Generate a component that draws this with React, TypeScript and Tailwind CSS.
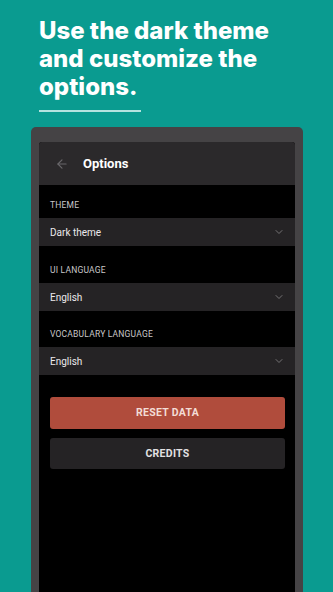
import { ArrowLeft, ChevronDown } from 'lucide-react';

const ui = { fontFamily: 'Roboto, "Liberation Sans", sans-serif' };

function Label({ text, top }: { text: string; top: string }) {
  return (
    <div className={`${top} pb-[8px] pl-[11px] text-[8.5px] leading-[10px] tracking-[0.2px] text-[#c9c7c9]`}>
      {text}
    </div>
  );
}

function Select({ value }: { value: string }) {
  return (
    <div className="flex h-[28px] items-center justify-between bg-[#252325] pl-[11px] pr-[10px]">
      <span className="text-[10px] text-[#ebe9eb]">{value}</span>
      <ChevronDown size={12} strokeWidth={2} className="text-[#747274]" />
    </div>
  );
}

export default function App() {
  return (
    <div className="flex h-[592px] w-[333px] flex-col overflow-hidden bg-[#0a9b90]">
      {/* Headline */}
      <div className="pl-[39px] pt-[17px]">
        <h1
          className="text-[24px] font-extrabold leading-[28px] text-white"
          style={{ fontFamily: 'Inter, "Noto Sans", sans-serif' }}
        >
          Use the dark theme
          <br />
          and customize the
          <br />
          options.
        </h1>
        <div className="mt-[9px] h-[2px] w-[102px] bg-[#b5e3df]" />
      </div>

      {/* Phone */}
      <div className="ml-[31px] mr-[30px] mt-[15px] flex flex-1 flex-col rounded-t-[5px] bg-[#454345] px-[8px] pt-[15px]" style={ui}>
        <div className="flex flex-1 flex-col overflow-hidden rounded-t-[3px] bg-black">
          <div className="flex h-[43px] items-center gap-[14px] bg-[#2b292b] pl-[16px]">
            <ArrowLeft size={14} strokeWidth={2} className="text-[#69676a]" />
            <span className="text-[13px] font-bold text-white">Options</span>
          </div>

          <Label text="THEME" top="pt-[15px]" />
          <Select value="Dark theme" />

          <Label text="UI LANGUAGE" top="pt-[19px]" />
          <Select value="English" />

          <Label text="VOCABULARY LANGUAGE" top="pt-[18px]" />
          <Select value="English" />

          <div className="ml-[11px] mr-[10px] mt-[22px] flex flex-col gap-[9px]">
            <button className="h-[32px] rounded-[3px] bg-[#b04c3c] text-[10.5px] font-bold tracking-[0.3px] text-[#f3dcd6]">
              RESET DATA
            </button>
            <button className="h-[31px] rounded-[3px] bg-[#252325] text-[10.5px] font-bold tracking-[0.3px] text-[#e2e0e2]">
              CREDITS
            </button>
          </div>
        </div>
      </div>
    </div>
  );
}
